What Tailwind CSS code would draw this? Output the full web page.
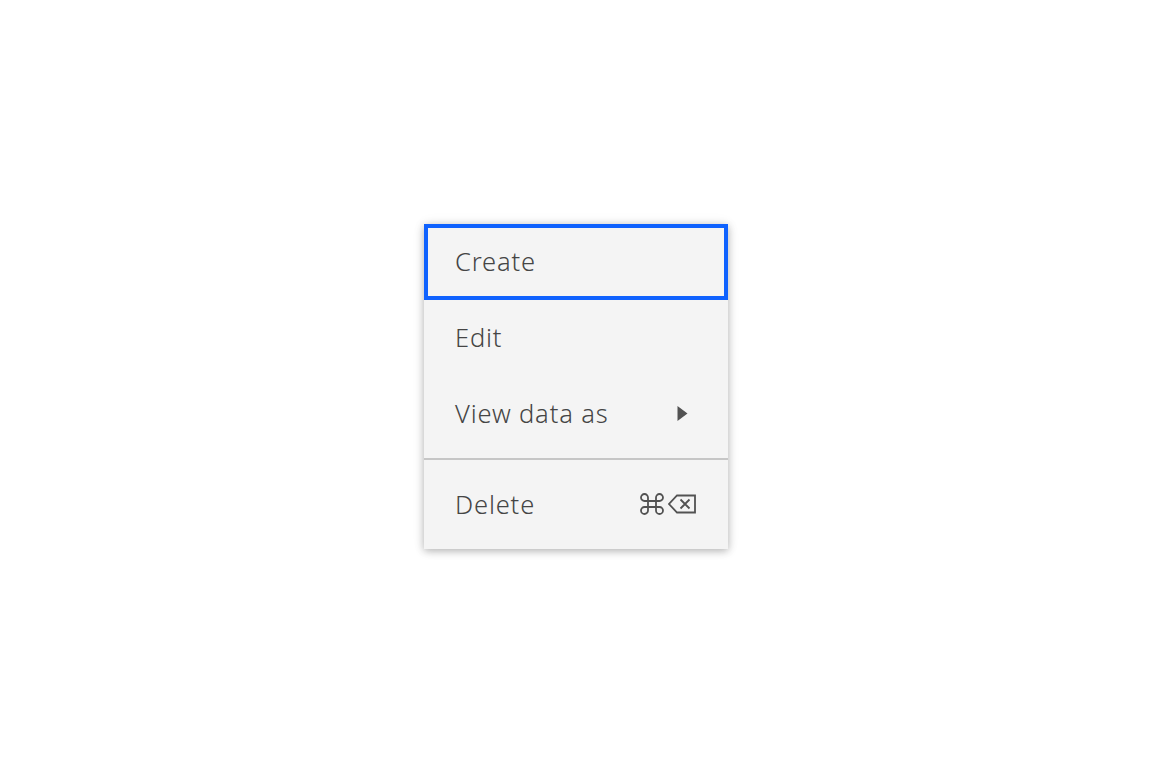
<!DOCTYPE html>
<html lang="en">
<head>
  <meta charset="UTF-8">
  <title>Context menu</title>
  <script src="https://cdn.jsdelivr.net/npm/@tailwindcss/browser@4"></script>
</head>
<body class="bg-white font-['Noto_Sans',sans-serif] text-[#454545] overflow-hidden">
  <div class="h-[767px] flex justify-center pt-[224px]">
    <!-- Menu -->
    <ul class="w-[304px] h-[325px] bg-[#f4f4f4] shadow-[0_2px_8px_rgba(0,0,0,0.28),0_0_14px_rgba(0,0,0,0.06)] text-[25.5px] font-light tracking-[0.85px]">
      <li class="h-[76px] flex items-center pl-[27px] pb-[2px] border-[4px] border-[#0f62fe]">Create</li>
      <li class="h-[76px] flex items-center pl-[31px] pb-[2px]">Edit</li>
      <li class="h-[76px] flex items-center justify-between pl-[31px] pr-[40px] pb-[2px]">
        <span>View data as</span>
        <svg width="11" height="15" viewBox="0 0 11 15"><path d="M0.500 0 10.500 7.500 0.500 15Z" fill="#525252"/></svg>
      </li>
      <li class="mt-[6px] mb-[7px] h-[2px] bg-[#c6c6c6]"></li>
      <li class="h-[76px] flex items-center justify-between pl-[31px] pr-[32px] pb-[2px]">
        <span>Delete</span>
        <span class="flex items-center gap-[3px]">
          <svg width="26" height="24" viewBox="0 0 26 24" fill="none" stroke="#525252" stroke-width="1.800">
            <path d="M9 9H17V15H9ZM9 9V5.500A3.500 3.500 0 1 0 5.500 9H20.500A3.500 3.500 0 1 0 17 5.500V18.500A3.500 3.500 0 1 0 20.500 15H5.500A3.500 3.500 0 1 0 9 18.500V9"/>
          </svg>
          <svg width="28" height="20" viewBox="0 0 28 20" fill="none" stroke="#525252" stroke-width="1.800">
            <path d="M27 1.500H9L1 10 9 18.500H27Z"/>
            <path d="M12.500 5.500 21.500 14.500M21.500 5.500 12.500 14.500"/>
          </svg>
        </span>
      </li>
    </ul>
  </div>
</body>
</html>
